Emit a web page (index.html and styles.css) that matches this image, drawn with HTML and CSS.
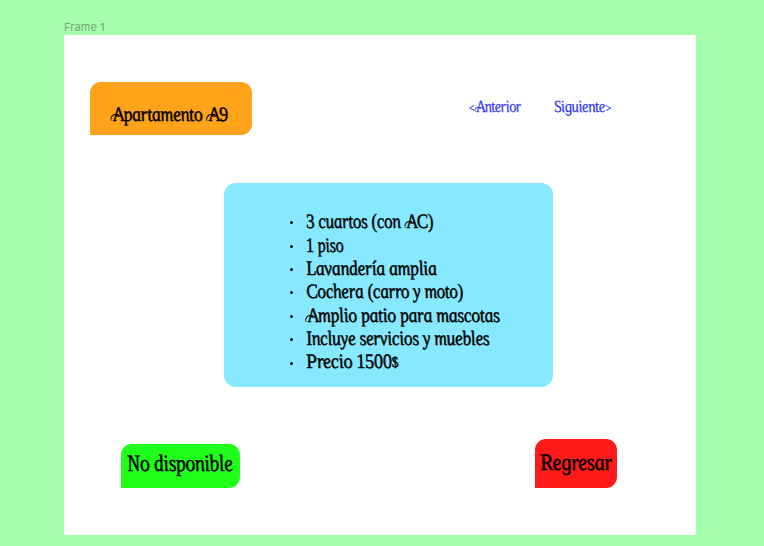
FILE: index.html
```html
<!DOCTYPE html>
<html lang="es">
<head>
<meta charset="utf-8">
<title>Apartamento A9</title>
<link rel="stylesheet" href="styles.css">
</head>
<body>
<div class="label">Frame 1</div>
<main class="frame">
  <header class="top">
    <h1 class="tag title"><span class="script t-title"><span class="swash">A</span>partamento <span class="swash">A</span>9</span></h1>
    <nav class="nav">
      <a class="script t-prev"><small>&lt;</small><span class="swash">A</span>nterior</a>
      <a class="script t-next">Siguiente<small>&gt;</small></a>
    </nav>
  </header>
  <section class="card">
    <ul class="list">
      <li><span class="script l1">3 cuartos (con <span class="swash">A</span>C)</span></li>
      <li><span class="script l2">1 piso</span></li>
      <li><span class="script l3">Lavandería amplia</span></li>
      <li><span class="script l4">Cochera (carro y moto)</span></li>
      <li><span class="script l5"><span class="swash">A</span>mplio patio para mascotas</span></li>
      <li><span class="script l6">Incluye servicios y muebles</span></li>
      <li><span class="script l7">Precio 1500<small>$</small></span></li>
    </ul>
  </section>
  <footer class="bottom">
    <div class="tag status"><span class="script t-status">No disponible</span></div>
    <div class="tag back"><span class="script t-back">Regresar</span></div>
  </footer>
</main>
</body>
</html>
```
FILE: styles.css
```css
* { box-sizing: border-box; }
body {
  margin: 0;
  width: 764px;
  height: 546px;
  padding: 20px 67px 11px 64px;
  overflow: hidden;
  background: #a6ffae;
}
.label {
  height: 15px;
  font: 11px/15px Inter, sans-serif;
  letter-spacing: .1px;
  color: #6fa676;
}
.frame {
  width: 632.4px;
  height: 500px;
  padding-top: 46.5px;
  background: #fff;
}
.script {
  display: inline-block;
  font-family: "Liberation Serif", serif;
  font-style: italic;
  font-weight: 400;
  white-space: nowrap;
  -webkit-text-stroke: .5px currentColor;
  transform: scaleX(var(--fit)) skewX(12deg);
  transform-origin: 0 50%;
}
/* Curl to the left of a capital A's crossbar */
.swash { position: relative; margin-left: .14em; }
.swash::before {
  content: "";
  position: absolute;
  left: -.18em;
  bottom: .22em;
  width: .5em;
  height: .25em;
  border-top: 1.3px solid currentColor;
  border-left: 1.3px solid currentColor;
  border-radius: .35em 0 0 0;
}
.top { display: flex; height: 101px; padding-left: 26px; }
.tag {
  margin: 0;
  display: flex;
  border-radius: 11px 11px 11px 0;
  color: #000;
}
.title {
  width: 162px;
  height: 53.5px;
  padding: 20px 0 0 21px;
  background: #ffa31a;
}
.t-title { --fit: .87; font-size: 20.5px; line-height: 24px; letter-spacing: -.4px; }
.nav {
  display: flex;
  gap: 34px;
  padding: 15px 0 0 216px;
  color: #2e35f0;
}
.nav .script { height: 20px; font-size: 17px; line-height: 20px; letter-spacing: -.5px; -webkit-text-stroke-width: .25px; }
.nav small { font-size: 12px; }
.t-prev { --fit: .83; width: 52px; }
.t-next { --fit: .86; width: 58px; }
.card {
  width: 329px;
  height: 204.5px;
  margin-left: 160.3px;
  padding: 27.6px 0 0 66px;
  border-radius: 12px;
  background: #87e9ff;
}
.list { margin: 0; padding: 0; list-style: none; }
.list li { display: flex; align-items: center; height: 23.4px; }
.list li::before {
  content: "";
  width: 3px;
  height: 3px;
  margin: 2px 13px 0 0;
  border-radius: 50%;
  background: #000;
}
.list .script { font-size: 20.5px; line-height: 23px; letter-spacing: -.3px; }
.list small { font-size: 15px; vertical-align: 1px; }
.l1 { --fit: .825; }
.l2 { --fit: .78; }
.l3 { --fit: .86; }
.l4 { --fit: .835; }
.list .l5 { --fit: .857; margin-left: -1px; }
.l6 { --fit: .845; }
.l7 { --fit: .885; }
.bottom {
  display: flex;
  align-items: flex-end;
  justify-content: space-between;
  height: 101px;
  padding: 0 79px 0 57px;
}
.status { width: 119px; height: 44.5px; padding: 6px 0 0 7px; background: #1fff1a; }
.back { width: 82px; height: 49px; padding: 10px 0 0 6px; background: #ff1a1a; }
.bottom .script { font-size: 23.5px; line-height: 26px; letter-spacing: -.4px; }
.t-status { --fit: .835; }
.t-back { --fit: .875; }
```
